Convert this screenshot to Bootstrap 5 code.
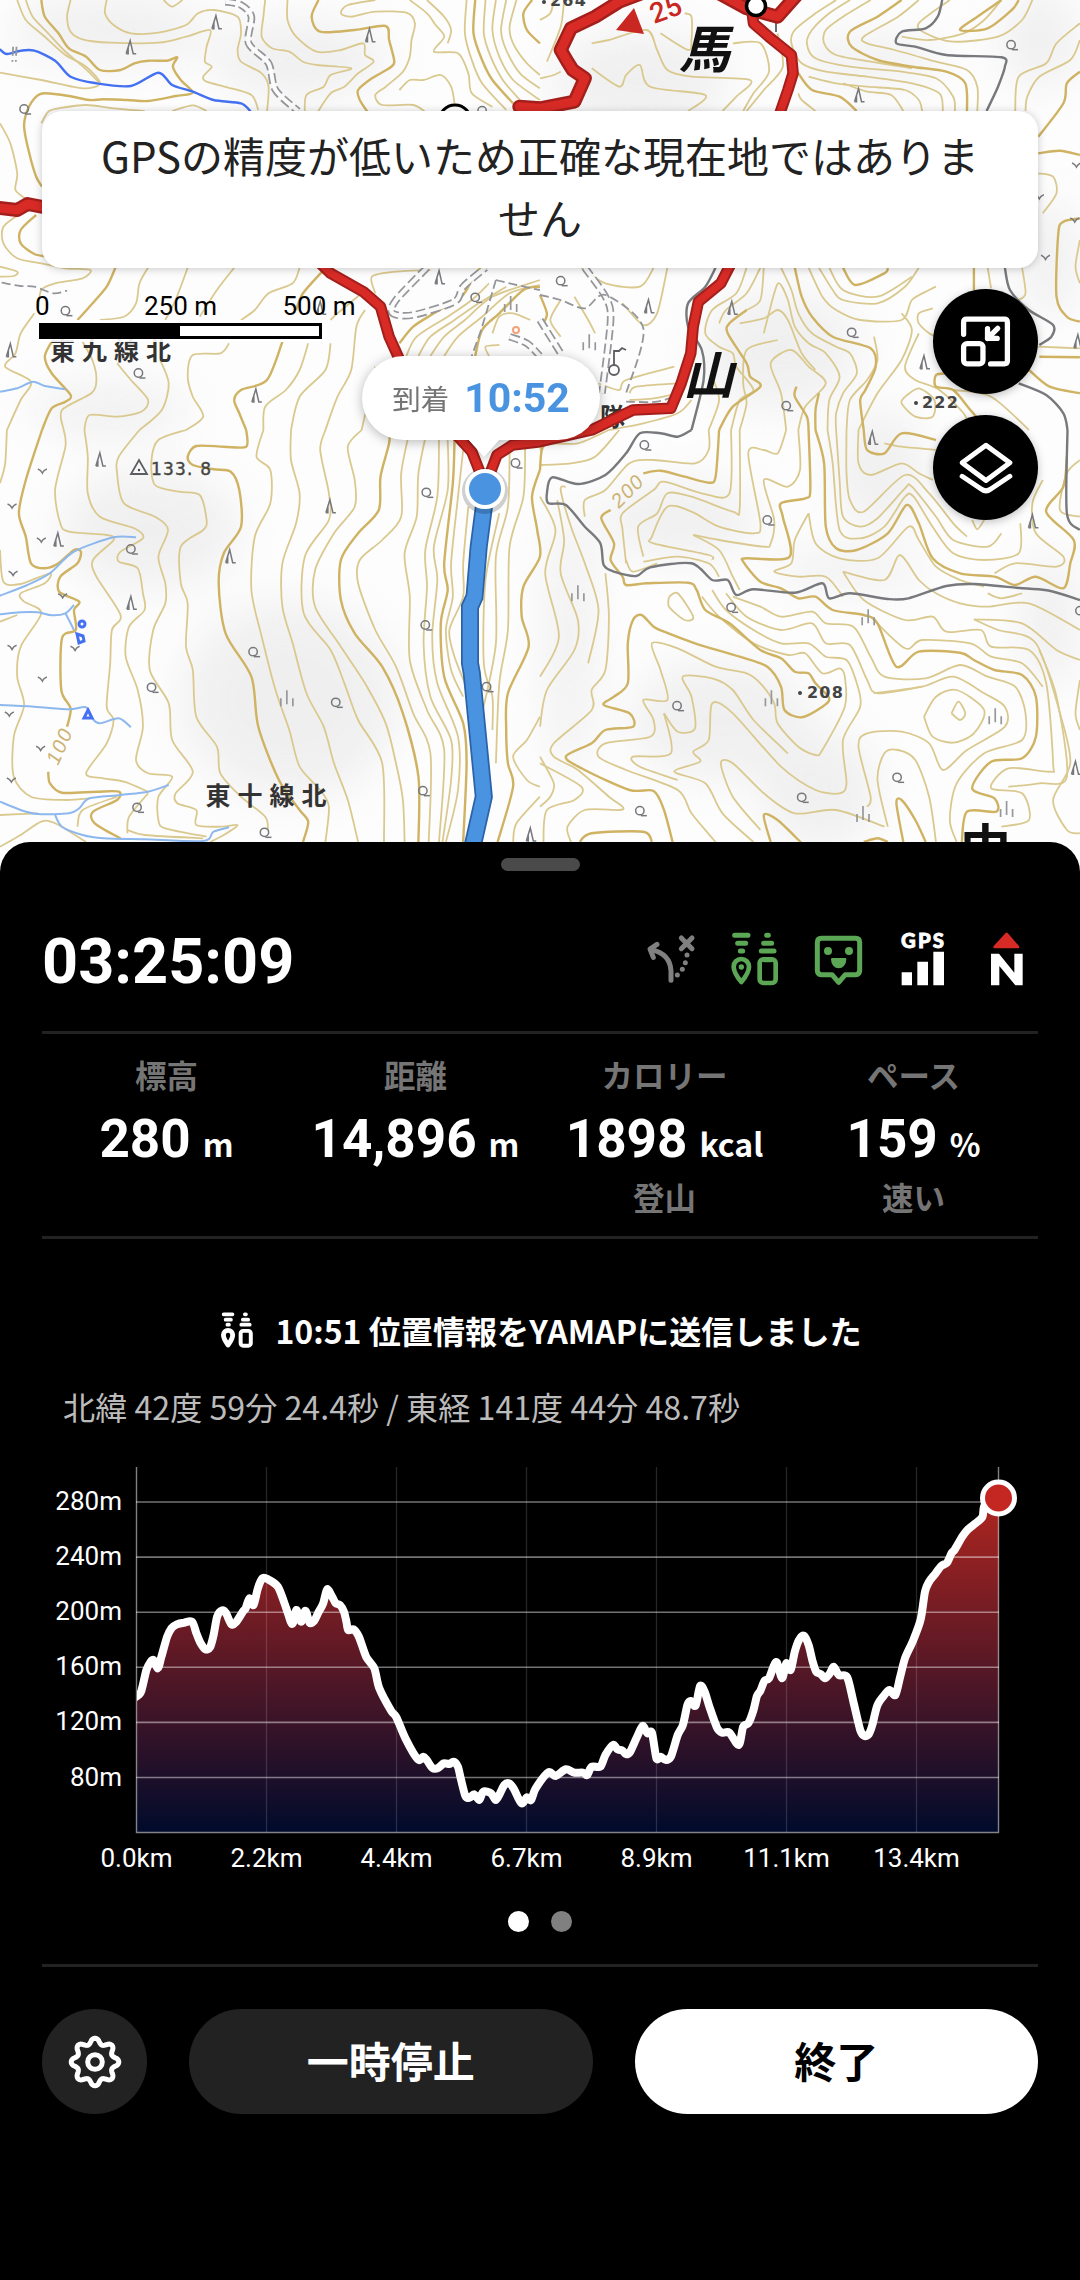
<!DOCTYPE html>
<html lang="ja">
<head>
  <meta charset="UTF-8">
  <title>YAMAP</title>
  <meta name="viewport" content="width=device-width, initial-scale=1">
  <link href="https://cdn.jsdelivr.net/npm/bootstrap@5.3.0/dist/css/bootstrap.min.css" rel="stylesheet">
  <style>
    :root {
      --jp: "Noto Sans CJK JP", sans-serif;
      --num: Roboto, "Noto Sans CJK JP", sans-serif;
      --line: #222;
      --muted: #757575;
      --route: #4a93e0;
    }

    body {
      background: #000;
      font-family: var(--jp);
      width: 1080px;
      height: 2280px;
      overflow: hidden;
    }

    /* Map */
    .map-area {
      height: 872px;
      padding: 111px 42px 0;
      overflow: hidden;
    }

    .map-canvas {
      position: absolute;
      top: 0;
      left: 0;
    }

    .map-canvas .thin { fill: none; stroke: #dac98f; stroke-width: 1.8; }
    .map-canvas .index { fill: none; stroke: #cfb262; stroke-width: 2.4; }
    .map-canvas .river { fill: none; stroke: #8db8ee; stroke-width: 2; }
    .map-canvas .stream { fill: none; stroke: #4470f2; stroke-width: 2.4; }
    .map-canvas .road { fill: none; stroke: #77797c; stroke-width: 2.4; }
    .map-canvas .trackEdge { fill: none; stroke: #94969a; stroke-width: 7.5; stroke-dasharray: 10 4; }
    .map-canvas .trackFill { fill: none; stroke: #fbfbfb; stroke-width: 4; }
    .map-canvas .trail { fill: none; stroke: #94969a; stroke-width: 1.8; stroke-dasharray: 9 4; }
    .map-canvas .courseEdge { fill: none; stroke: #a41f1b; stroke-width: 11.5; stroke-linejoin: round; stroke-linecap: round; }
    .map-canvas .courseFill { fill: none; stroke: #d82b26; stroke-width: 7.5; stroke-linejoin: round; stroke-linecap: round; }
    .map-canvas .courseEdge.wide { stroke-width: 14; }
    .map-canvas .courseFill.wide { stroke-width: 9; }

    .notice-banner {
      position: relative;
      height: 157px;
      padding: 13px 48px;
      border-radius: 20px;
      background: #fff;
      color: #222;
      font-size: 42px;
      line-height: 62px;
      text-align: center;
      box-shadow: 0 1px 8px rgba(0, 0, 0, .22);
    }

    .scale-bar {
      overflow: visible;
      font-family: var(--num);
      margin-left: -3px;
      margin-top: 22px;
      color: #000;
    }

    .map-controls { gap: 21px; margin-top: 21px; }

    .map-btn {
      width: 105px;
      height: 105px;
      background: #000;
      box-shadow: 0 2px 8px rgba(0, 0, 0, .25);
    }

    .arrival {
      position: absolute;
      left: 362px;
      top: 356px;
      width: 238px;
      height: 84px;
      border-radius: 42px;
      background: #fff;
      filter: drop-shadow(0 2px 6px rgba(0, 0, 0, .28));
      gap: 15px;
    }

    .arrival:after {
      content: "";
      position: absolute;
      top: 83px;
      left: 106px;
      border: 16px solid transparent;
      border-top: 18px solid #fff;
      border-bottom: 0;
    }

    .arrival-label { color: var(--muted); font-size: 28.5px; }
    .arrival-time { color: var(--route); font: 700 41px var(--num); }

    /* Bottom sheet */
    .sheet {
      position: relative;
      margin-top: -30px;
      padding: 16px 42px 0;
      border-radius: 30px 30px 0 0;
      background: #000;
      color: #fff;
      height: 1438px;
    }

    .grip {
      width: 79px;
      height: 13px;
      border-radius: 7px;
      background: #4a4a4a;
    }

    .status-row {
      margin-top: 18px;
      height: 145px;
      border-bottom: 3px solid var(--line);
    }

    .status-icons { margin-right: 1px; }

    .elapsed { font: 700 63px/1 var(--num); padding-top: 3px; }

    .stats {
      height: 205px;
      padding-top: 17px;
      border-bottom: 3px solid var(--line);
      text-align: center;
      white-space: nowrap;
    }

    .stat-name { color: var(--muted); font-size: 31.5px; line-height: 46px; font-weight: 700; }
    .stat-value { font: 700 53px/76px var(--num); padding-top: 4px; height: 76px; }
    .stat-value span { font: 700 32px/1 var(--jp); margin-left: 12px; }

    .sent-msg {
      margin-top: 67px;
      padding-left: 3px;
      height: 48px;
      gap: 22px;
      font-size: 32.1px;
      font-weight: 700;
    }

    .position-text {
      margin: 28px 0 0 21px;
      height: 48px;
      line-height: 48px;
      font-size: 32.15px;
      color: #bbb;
    }

    .profile { display: block; margin: 20px 0 0 -42px; font-family: var(--num); }

    .page-dots { height: 21px; gap: 22px; margin-top: 31px; }
    .page-dots span { width: 21px; height: 21px; background: #808080; }
    .page-dots span.current { background: #fff; }

    .sheet-actions {
      margin-top: 32px;
      padding-top: 42px;
      gap: 42px;
      border-top: 3px solid var(--line);
    }

    .act {
      height: 105px;
      border-radius: 53px;
      border: 0;
      padding-bottom: 5px;
      background: #222;
      color: #fff;
      font-size: 42px;
      font-weight: 700;
    }

    .act-round { width: 105px; }
    .act-light { background: #fff; color: #000; }
  </style>
</head>
<body>
  <main>
    <section class="map-area position-relative">
      <svg class="map-canvas" width="1080" height="872" viewBox="0 0 1080 872">
        <defs>
          <filter id="soft" x="-50%" y="-50%" width="200%" height="200%"><feGaussianBlur stdDeviation="22"/></filter>
          <g id="broadleaf" fill="none" stroke="#77787c" stroke-width="1.5"><circle cy="-1" r="4.2"/><path d="M1 4h6"/></g>
          <g id="conifer" fill="none" stroke="#77787c" stroke-width="1.5"><path d="M-4 6 0-7 3 6h3M-4 6h2V-1"/></g>
          <g id="scrub" fill="none" stroke="#96989c" stroke-width="1.7"><path d="M-6 7v-8M0 5v-14M6 7v-8"/></g>
          <g id="field" fill="none" stroke="#77787c" stroke-width="1.6"><path d="M-4.500-2q3 1 4.500 4 1.500-3 4.500-4"/></g>
        </defs>
        <rect width="1080" height="872" fill="#fdfdfd"/>
        <g fill="#e9e9ea" opacity=".65" filter="url(#soft)">
          <ellipse cx="110" cy="30" rx="100" ry="34"/>
          <ellipse cx="300" cy="60" rx="90" ry="40"/>
          <ellipse cx="640" cy="80" rx="90" ry="50"/>
          <ellipse cx="870" cy="60" rx="80" ry="24"/>
          <ellipse cx="1040" cy="40" rx="40" ry="50"/>
          <ellipse cx="1050" cy="260" rx="30" ry="60"/>
          <ellipse cx="150" cy="530" rx="90" ry="60"/>
          <ellipse cx="110" cy="410" rx="80" ry="26"/>
          <ellipse cx="290" cy="700" rx="110" ry="100"/>
          <ellipse cx="780" cy="350" rx="80" ry="60"/>
          <ellipse cx="680" cy="520" rx="80" ry="40"/>
          <ellipse cx="880" cy="470" rx="46" ry="60"/>
          <ellipse cx="850" cy="570" rx="80" ry="20"/>
          <ellipse cx="720" cy="720" rx="90" ry="60"/>
          <ellipse cx="820" cy="790" rx="60" ry="60"/>
          <ellipse cx="1050" cy="620" rx="30" ry="70"/>
          <ellipse cx="570" cy="640" rx="24" ry="140"/>
        </g>
        <g id="terrain"></g>
        <g fill="none" stroke="#4470f2" stroke-width="3">
          <circle cx="82" cy="624" r="3"/><path d="m77 634 6 2 1 5-5 2zM88 710l4 8h-8z"/>
        </g>
        <g stroke="#5b5d61" stroke-width="1.8" fill="none">
          <circle cx="614" cy="370" r="5"/><path d="M614 365v-14h5l3-3 4 2M131 474h16l-8-14zM776 20v12"/>
        </g>
        <circle cx="516" cy="330" r="3" fill="none" stroke="#f1a27a" stroke-width="2"/>
        <g fill="#333" font-family="'Noto Sans CJK JP', sans-serif" font-weight="700">
          <text x="50" y="360" font-size="25" letter-spacing="7">東九線北</text>
          <text x="205.500" y="805" font-size="25" letter-spacing="7">東十線北</text>
          <text x="600" y="426" font-size="25">隊</text>
          <text transform="translate(679 68) skewX(-14)" font-size="51" fill="#111">馬</text>
          <text transform="translate(683 394) skewX(-14)" font-size="51" fill="#111">山</text>
          <text x="960" y="867" font-size="51" fill="#111">中</text>
        </g>
        <g fill="#444" font-family="'DejaVu Sans', sans-serif" font-weight="700" font-size="16" letter-spacing="1.200">
          <text x="807" y="698">208</text>
          <text x="922" y="408">222</text>
          <text x="550" y="6">264</text>
          <text x="151" y="475" font-family="'DejaVu Sans', sans-serif" font-weight="400" font-size="17" letter-spacing="1.200" stroke="#444" stroke-width=".4">133. 8</text>
        </g>
        <g fill="#444"><circle cx="800" cy="693" r="2"/><circle cx="916" cy="403" r="2"/><circle cx="544" cy="2" r="2"/><circle cx="139" cy="470" r="1.200"/></g>
        <g fill="#ccb272" font-family="'Liberation Sans', sans-serif" font-style="italic" font-size="20" letter-spacing="1.500">
          <text transform="translate(58 766) rotate(-66)">100</text>
          <text transform="translate(619 509) rotate(-45)">200</text>
        </g>
        <circle cx="455" cy="121" r="16" fill="none" stroke="#000" stroke-width="3"/>
        <g id="courses"></g>
        <circle cx="756" cy="6" r="9.500" fill="#fff" stroke="#000" stroke-width="3.500"/>
        <path d="M616 30 634 8l10 26z" fill="#c92722"/>
        <text transform="translate(654 24) rotate(-20)" fill="#c92722" font-family="Roboto, sans-serif" font-weight="500" font-size="28">25</text>
        <circle cx="485" cy="491" r="23" fill="#000" opacity=".18"/>
        <circle cx="485" cy="489" r="18" fill="#4a93e0" stroke="#fff" stroke-width="4"/>
      </svg>

      <div class="notice-banner">GPSの精度が低いため正確な現在地ではありません</div>

      <div class="d-flex justify-content-between align-items-start position-relative">
        <svg class="scale-bar" width="330" height="60" font-size="26">
          <path d="M0 30h288v22H0z" fill="#fff" opacity=".9"/>
          <text x="-4" y="25">0</text>
          <text x="105" y="25">250 m</text>
          <text x="243.500" y="25">500 m</text>
          <path d="M1.500 34.500h280v13h-280z" fill="#fff" stroke="#000" stroke-width="3"/>
          <path d="M1 34h140v14H1z"/>
        </svg>
        <div class="map-controls d-flex flex-column">
          <div class="map-btn rounded-circle d-flex align-items-center justify-content-center">
            <svg width="55" height="55" viewBox="0 0 54 54" fill="none" stroke="#fff" stroke-width="5.200" stroke-linecap="round" stroke-linejoin="round">
              <path d="M5.500 20V8q0-3 3-3h37q3 0 3 3v38q0 3-3 3H32"/>
              <rect x="5.500" y="29" width="19" height="20" rx="3.500"/>
              <path d="M39 14 29 24M29 14.500V24h9.500"/>
            </svg>
          </div>
          <div class="map-btn rounded-circle d-flex align-items-center justify-content-center">
            <svg width="56" height="56" viewBox="0 0 54 54" fill="none" stroke="#fff" stroke-width="4.800" stroke-linecap="round" stroke-linejoin="round">
              <path d="M27 5 50 22 27 39 4 22z"/>
              <path d="M4 35l18 12q5 4 10 0l18-12"/>
            </svg>
          </div>
        </div>
      </div>

      <div class="arrival d-flex align-items-center justify-content-center">
        <span class="arrival-label">到着</span>
        <span class="arrival-time">10:52</span>
      </div>
    </section>

    <section class="sheet">
      <div class="grip mx-auto"></div>

      <div class="status-row d-flex align-items-center justify-content-between">
        <div class="elapsed">03:25:09</div>
        <div class="status-icons d-flex gap-4">
          <svg width="60" height="60" viewBox="32 58 180 180" fill="none" stroke="#808080" stroke-width="15" stroke-linecap="round" stroke-linejoin="round">
            <path d="M122 209v-28q-2-52-61-65M80 101 59 115l10 25M153 82l32 32M185 82l-32 32"/>
            <path d="M170 133v.1M165 156v.1M156 176v.1M141 193v.1"/>
          </svg>
          <svg width="60" height="60" viewBox="285 58 180 180" fill="none" stroke="#5ca755" stroke-width="15" stroke-linecap="round" stroke-linejoin="round">
            <path d="M314 74h40M323 98h24M331 121h7M410 74h5M401 98h24M394 121h38"/>
            <path d="M334 214q-23-28-23-46a23 23 0 0 1 46 0q0 18-23 46z" stroke-width="14"/>
            <circle cx="334" cy="169" r="8" fill="#5ca755" stroke="none"/>
            <rect x="389" y="146" width="48" height="71" rx="11" stroke-width="14"/>
            <path d="M404 150h18" stroke-width="10"/>
          </svg>
          <svg width="60" height="60" viewBox="537 58 180 180" fill="none" stroke="#5ca755" stroke-width="15" stroke-linejoin="round">
            <path d="M574 83h103q12 0 12 12v84q0 13-12 13h-31l-20 23-20-23h-32q-12 0-12-13V95q0-12 12-12z"/>
            <g fill="#5ca755" stroke="none"><circle cx="594" cy="121" r="12"/><circle cx="657" cy="121" r="12"/><path d="M606 142h40q3 0 3 4a23 27 0 0 1-46 0q0-4 3-4z"/></g>
          </svg>
          <svg width="60" height="60" viewBox="789 58 180 180" fill="#fff">
            <text x="813" y="112" font-family="Lato, sans-serif" font-weight="900" font-size="61" textLength="129" lengthAdjust="spacing" stroke="#fff" stroke-width="2.500">GPS</text>
            <path d="M815 185h31v39h-31zM862 153h32v71h-32zM910 123h32v101h-32z"/>
          </svg>
          <svg width="60" height="60" viewBox="1041 58 180 180" fill="#fff">
            <path d="M1130 70 1164 109H1094z" fill="#d82b26" stroke="#d82b26" stroke-width="8" stroke-linejoin="round"/>
            <path d="M1083 224v-95h24l46 57v-57h25v95h-22l-48-58v58z"/>
          </svg>
        </div>
      </div>

      <div class="stats row g-0">
        <div class="col-3">
          <div class="stat-name">標高</div>
          <div class="stat-value">280<span>m</span></div>
        </div>
        <div class="col-3">
          <div class="stat-name">距離</div>
          <div class="stat-value">14,896<span>m</span></div>
        </div>
        <div class="col-3">
          <div class="stat-name">カロリー</div>
          <div class="stat-value">1898<span>kcal</span></div>
          <div class="stat-name">登山</div>
        </div>
        <div class="col-3">
          <div class="stat-name">ペース</div>
          <div class="stat-value">159<span>%</span></div>
          <div class="stat-name">速い</div>
        </div>
      </div>

      <div class="sent-msg d-flex align-items-center justify-content-center">
        <svg width="32" height="36" viewBox="302 65 145 160" fill="none" stroke="#fff" stroke-width="17" stroke-linecap="round" stroke-linejoin="round">
          <path d="M314 74h40M323 98h24M331 121h7M410 74h5M401 98h24M394 121h38"/>
          <path d="M334 213q-21-28-21-45a21 21 0 0 1 42 0q0 17-21 45z" stroke-width="22"/>
          <rect x="391" y="149" width="46" height="67" rx="11" stroke-width="18"/>
        </svg>
        <span>10:51 位置情報をYAMAPに送信しました</span>
      </div>
      <div class="position-text">北緯 42度 59分 24.4秒 / 東経 141度 44分 48.7秒</div>

      <svg class="profile" width="1080" height="430" viewBox="0 1450 1080 430" font-size="26" fill="#fff">
        <defs>
          <linearGradient id="heat" gradientUnits="userSpaceOnUse" x1="0" y1="1475" x2="0" y2="1828">
            <stop offset="0" stop-color="#bb271f"/>
            <stop offset="1" stop-color="#020b2b"/>
          </linearGradient>
          <clipPath id="plot"><path d="M137 1450h880v383H137z"/></clipPath>
        </defs>
        <path id="heatArea" fill="url(#heat)"/>
        <g id="grid"></g>
        <path id="heatLine" fill="none" stroke="#fff" stroke-width="8" stroke-linejoin="round" stroke-linecap="round" clip-path="url(#plot)"/>
        <circle cx="998.500" cy="1498" r="16" fill="#c42722" stroke="#fff" stroke-width="5"/>
      </svg>

      <div class="page-dots d-flex justify-content-center">
        <span class="current rounded-circle"></span>
        <span class="rounded-circle"></span>
      </div>

      <div class="sheet-actions d-flex">
        <button class="act act-round flex-shrink-0 p-0 d-flex align-items-center justify-content-center" type="button" aria-label="設定">
          <svg width="60" height="60" viewBox="-30 -30 60 60" fill="none" stroke="#fff" stroke-width="5">
            <path id="gear" stroke-linejoin="round"/>
            <circle r="7.300"/>
          </svg>
        </button>
        <button class="act flex-fill w-50" type="button">一時停止</button>
        <button class="act act-light flex-fill w-50" type="button">終了</button>
      </div>
    </section>
  </main>

  <script src="https://cdn.jsdelivr.net/npm/bootstrap@5.3.0/dist/js/bootstrap.bundle.min.js"></script>
  <script>
    const NS = 'http://www.w3.org/2000/svg';

    // Survey sheets: origin in the map and units per pixel
    const sheets = {
      nw: { x: 0, y: 0, kx: 2.904, ky: 3 },
      ne: { x: 540, y: 0, kx: 2.904, ky: 3 },
      sw: { x: 0, y: 430, kx: 2.904, ky: 3 },
      se: { x: 540, y: 430, kx: 2.904, ky: 3 }
    };

    const lines = {
      nw: {
        thin: [
          '50,0 75,60 130,110 190,165 250,200 290,250 240,265 120,240 0,218',
          '75,0 95,50 140,100 185,150 230,190 262,220 290,250',
          '205,0 195,50 205,95 240,118 320,128 460,128 540,110 610,90 600,140 595,185 615,200 590,230 600,245 660,262 730,285 750,330',
          '310,0 305,40 330,75 380,100 460,98 540,75 575,40 620,30 690,50 700,100 690,150 700,185 760,220 780,260 775,340',
          '475,0 500,20 530,0',
          '770,0 765,50 760,110 790,145 840,155 880,185 920,195 1020,205 960,225 940,260 890,285 885,340',
          '835,0 835,60 860,110 920,155 990,150 1055,130 1060,165 1085,185 1040,220 1000,260 960,280 920,340',
          '1090,0 1010,15 990,40 1020,50 1090,35 1180,38 1205,70 1195,120 1190,170 1170,215 1120,260 1090,285 1110,315 1200,315 1240,340',
          '1190,0 1240,40 1265,75 1290,110 1260,155 1330,160 1360,220 1370,280 1430,320',
          '1240,0 1290,50 1310,90 1300,130',
          '1160,270 1190,240 1230,240 1280,225 1310,260 1320,310',
          '1355,0 1350,100 1370,180 1400,250 1470,330',
          '1410,0 1405,100 1425,170 1460,240 1510,300',
          '1440,0 1430,90 1450,170 1490,240 1568,300',
          '1470,0 1455,90 1470,150 1510,220 1568,265',
          '1500,0 1480,80 1490,130 1530,190 1568,225',
          '0,370 30,430 50,520 45,570 80,600',
          '120,370 140,335 170,325 250,315 330,325 420,333',
          '500,333 560,316 600,333',
          '60,640 10,680 10,730 50,775 120,790 190,805 262,810 240,835 160,850 120,870 110,930',
          '0,800 50,815 40,828 0,830',
          '430,803 405,850 395,910 360,950 290,960',
          '545,803 510,900 480,960',
          '680,803 630,870 580,950',
          '870,803 850,850 780,880 740,930 700,960',
          '100,940 60,1000 45,1060 15,1100 90,1145 60,1200 20,1290',
          '240,1025 270,1085 280,1140 265,1180 180,1230 185,1290',
          '340,1090 380,1140 430,1200 410,1235 340,1250 260,1245 245,1290',
          '465,1080 490,1150 470,1230 405,1290',
          '665,1030 640,1060 560,1065 545,1130 560,1190 590,1250 540,1290',
          '895,1030 870,1110 830,1170 770,1220 765,1290',
          '960,1030 945,1110 870,1190 845,1290',
          '1060,930 1035,980 1020,1110 980,1190 945,1290',
          '1050,880 980,940 960,960',
          '1180,1068 1210,1010 1300,950 1370,900 1420,850',
          '1215,1068 1250,1010 1320,960 1390,910 1470,860',
          '1250,1068 1290,1010 1350,960 1430,890 1568,840',
          '1290,1068 1330,1010 1400,950 1480,880 1568,855',
          '1090,880 1080,830 1150,815 1250,810',
          '1420,1068 1410,1040 1450,1035',
          '1430,1000 1450,950 1490,940 1540,960',
          '1090,1100 1070,1200 1050,1290'
        ],
        index: [
          '120,0 130,50 170,100 200,145 250,170 290,210 350,210 390,190 430,182 485,182 515,172 502,200 525,240 560,278 510,288 430,303 370,300 300,298 260,300 200,288 130,280 105,290 80,330 70,380 85,460 105,530 122,560',
          '925,0 905,50 930,95 1030,90 1120,78 1130,120 1145,185 1130,205 1080,235 1040,270 1045,300 1070,340',
          '1380,0 1375,100 1400,180 1430,240 1490,310',
          '1545,0 1520,40 1530,90 1568,130',
          '105,645 60,690 60,730 100,762 140,770',
          '335,803 310,860 260,920 225,960',
          '150,1025 130,1070 150,1120 205,1185 190,1205 150,1225 122,1290',
          '820,1025 775,1140 700,1170 680,1200 695,1240 715,1290',
          '940,810 880,880 860,930',
          '1160,1030 1200,980 1260,940 1340,890 1370,840 1395,803',
          '1568,860 1520,870 1450,940 1400,990 1380,1068'
        ],
        stream: ['0,148 20,162 60,152 100,152 160,182 205,230 280,250 380,258 460,218 500,255 560,275 620,300 700,310 728,335'],
        river: ['0,1175 50,1165 95,1145 130,1158 190,1168'],
        track: ['655,5 700,15 730,50 722,130 780,190 800,270 865,333', '1240,803 1150,900 1140,940 1200,945 1320,905 1345,860 1410,803', '1480,1010 1530,1030 1568,1068'],
        trail: ['5,848 60,858 100,860 155,880 195,872', '1440,840 1400,980 1370,1068', '1440,840 1500,855 1568,870', '38,140 36,185', '48,140 46,185']
      },
      ne: {
        thin: [
          '70,0 60,80 20,185', '0,60 30,40 40,0', '0,235 40,225 60,215',
          '150,130 200,120 310,90 340,150 370,210 440,230 610,240 570,290 530,333',
          '420,40 440,50 440,120 430,150 350,100',
          '150,205 230,260 250,225 290,195 320,260 480,285 430,333',
          '560,130 640,130 665,215 620,280 590,333',
          '690,100 705,200 650,270 600,333',
          '860,0 800,40 740,90 730,130 760,190 830,215 950,230 1080,250 1160,280 1170,333',
          '900,0 840,40 790,90 775,130 800,175 900,200 1050,215 1150,235 1200,290 1205,333',
          '960,0 880,50 830,90 825,130 860,165 960,185 1080,205',
          '1100,0 1040,50 940,110 950,130 1030,150 1150,185 1240,210 1270,260 1270,333',
          '1340,0 1290,60 1230,100 1130,120 1050,110',
          '1430,0 1400,60 1330,110 1200,125 1120,100 1100,70 1190,0',
          '1568,70 1500,130 1470,190 1390,230 1380,333',
          '1568,120 1540,180 1450,230 1415,290 1410,333',
          '750,280 760,300 800,333',
          '880,250 950,275 1020,285 1055,333',
          '780,230 860,250 950,260 1060,270 1100,300 1110,333',
          '1447,520 1490,530 1500,580 1460,640',
          '1447,1040 1568,1045',
          '1568,720 1555,800 1568,850',
          '120,803 190,850 290,860 330,803',
          '240,910 300,975 340,940 370,803',
          '60,900 30,960 60,1010', '100,890 140,960 160,1000',
          '600,803 570,880 500,930 480,1000 520,1040 560,1060 570,1100 620,1170 580,1200 550,1290',
          '640,803 600,880 540,930 520,970',
          '700,803 730,870 750,940 790,1000 860,1040 900,1060 920,1120 880,1180 860,1240 860,1290',
          '780,803 820,890 860,930 930,960 1050,960 1080,900 1130,870 1150,860',
          '810,803 850,870 880,900 980,910 1060,860 1100,803',
          '840,803 880,870 980,890 1080,830',
          '650,803 640,900 600,930', '650,1000 680,880 695,850 720,900 740,980 780,1030 830,1060 870,1130 840,1200 835,1290',
          '580,970 650,955 690,930 720,960 760,1060 800,1110',
          '1141,925 1100,940 1100,970 1130,1000 1150,1010',
          '1050,940 1080,990 1050,1080 980,1180 925,1290',
          '1060,1190 1050,1210 1090,1250 1140,1250 1145,1200 1100,1165 1060,1190',
          '1100,1000 1060,1100 1090,1140 1160,1170 1230,1240 1250,1290',
          '715,1290 700,1180 670,1090 730,1050 780,1100 830,1150 770,1220 750,1290',
          '580,1290 600,1210 590,1150 600,1050 690,1020', '890,1290 900,1200 950,1140 980,1080 970,1010',
          '1300,803 1310,865', '1200,1170 1310,1190 1420,1290', '1400,803 1410,880 1390,900',
          '260,1180 280,1160 400,1150', '260,1200 330,1195 400,1180', '170,1150 230,1170 250,1140 390,1100',
          '200,1290 300,1270 400,1240 440,1200', '490,1290 520,1200 500,1130'
        ],
        index: [
          '1050,0 980,50 900,95 905,140 980,180 1080,200 1180,215 1235,250 1240,333',
          '1340,0 1270,50 1220,90 1300,85 1370,30 1390,0',
          '1568,215 1530,250 1520,310 1447,410',
          '750,220 790,270 870,290 920,333',
          '1447,460 1510,452 1568,465',
          '1568,655 1520,665 1505,700 1500,890 1530,950 1568,965',
          '1450,1070 1568,1072',
          '740,803 760,890 790,950 850,1010 960,1045 975,1100 945,1170 930,1200 940,1290',
          '880,803 915,855 1000,820 1010,803',
          '600,930 550,970 545,1000 600,1090 610,1130 640,1160 560,1220 520,1290',
          '780,1290 775,1250 740,1190 745,1160', '800,1290 800,1230 810,1180',
          '1180,1120 1150,1125 1150,1160 1200,1170 1250,1230 1300,1290',
          '1420,1110 1480,1160 1568,1180',
          '1260,803 1260,870', '0,885 20,940 10,970'
        ],
        road: [
          '1168,0 1155,50 1120,85 1050,95 1035,130 1090,140 1180,165 1340,172 1350,200 1330,260 1297,333',
          '1350,803 1365,870 1420,930 1490,975 1485,1010 1450,1035',
          '1390,1150 1470,1185 1520,1240 1532,1290',
          '510,803 480,860 430,910 430,980 470,1050 475,1140 440,1290'
        ],
        track: ['130,803 190,890 205,960 180,1180', '0,960 60,1060'],
        trail: ['0,885 60,900 130,925 190,885 300,985 250,1180', '250,1205 340,1205 400,1185']
      },
      sw: {
        thin: [
          '20,0 15,100 0,160',
          '0,360 10,455 60,462 145,430 130,460 60,490 70,515 120,550 60,650 50,740 70,825 40,920 40,1040 90,1100 190,1110 260,1105',
          '0,575 50,555',
          '185,0 190,50 160,180 175,280 200,305 310,315 330,330 270,390 280,440 350,555 325,600 320,700 310,830 330,870 310,940 250,1030 300,1045 360,1055 430,1085',
          '245,0 255,80 255,190 290,260 390,295 415,325 350,365 345,395 400,415 415,490 420,540 375,590 365,680 400,780 415,890 395,990 430,1030 500,1040 460,1100 460,1170 480,1195 600,1220',
          '405,0 345,80 340,130 360,220 450,260 488,300 460,380 480,460 480,520 445,600 435,720 490,820 500,930 560,1025 510,1090 515,1120 570,1140 570,1185 640,1190 690,1185 650,1215 610,1236',
          '540,0 460,30 440,90 450,165 520,185 580,195 600,270 590,300 525,350 525,460 545,520 540,650 560,720 570,860 630,950 640,1030 700,1100 770,1160 778,1200',
          '765,0 745,80 785,120 785,220 740,320 730,480 760,620 800,780 840,900 870,1010 930,1080 955,1130 945,1236',
          '845,0 845,90 870,190 860,280 820,400 820,530 850,640 890,790 940,890 970,1000 1010,1110 1040,1236',
          '945,0 930,60 955,190 955,270 885,380 882,550 960,660 1000,760 1040,870 1110,1000 1115,1236',
          '1050,0 1010,50 1030,150 1030,230 970,310 915,420 915,530 990,650 1060,760 1120,880 1150,1000 1170,1110 1175,1236',
          '1190,0 1165,130 1165,260 1110,330 1045,390 1040,460 1090,600 1150,710 1200,850 1250,970 1245,1236',
          '1240,0 1215,130 1210,260 1175,370 1190,500 1190,690 1240,840 1290,960 1275,1236',
          '1275,30 1270,200 1235,360 1240,470 1230,640 1250,800 1310,930 1310,1050 1285,1236',
          '1300,30 1300,180 1260,350 1270,450 1255,620 1270,760 1330,920 1330,1080 1295,1236',
          '1345,60 1330,200 1310,400 1315,500 1295,600 1310,720 1345,800',
          '1360,230 1345,400 1345,500 1305,600 1320,680 1350,760',
          '1450,250 1410,450 1405,700 1430,800 1430,900',
          '1480,50 1475,230 1440,380 1440,640 1400,850',
          '1525,50 1520,200 1480,350 1475,600 1450,760 1440,1000',
          '1568,860 1530,930 1490,980 1530,1050 1568,1070',
          '1568,1100 1500,1180 1490,1236',
          '0,1155 110,1150', '0,1250 60,1215 120,1175 160,1180 250,1236',
          '225,1190 240,1140 340,1100', '370,1210 375,1160 430,1090', '370,1200 420,1215 590,1225'
        ],
        index: [
          '122,0 75,150 55,250 75,320 90,400 130,415 170,400 215,360 235,365 225,400 175,440 172,485 230,515 215,540 220,600 180,625 178,780 205,835 195,890',
          '140,1025 145,1060 180,1088 280,1085 345,1085 340,1110 270,1145 275,1180 350,1225',
          '715,0 715,50 650,50 570,48 545,80 560,105 620,118 670,125 695,180 700,290 650,370 635,460 655,610 730,740 750,890 810,1050 870,1140 895,1175 880,1236',
          '1130,0 1130,40 1105,140 1100,240 1040,310 990,390 990,510 1030,610 1110,710 1170,850 1215,1040 1215,1236',
          '1320,30 1315,160 1290,400 1300,480 1280,580 1290,740 1345,880 1355,1000 1345,1236',
          '1568,120 1545,200 1560,300 1568,380 1520,470 1515,560 1535,650 1475,790 1470,900 1475,1000 1490,1070 1445,1236'
        ],
        river: [
          '0,497 80,465 145,430 215,365 330,322 395,322',
          '0,553 60,547 110,547 150,556 190,550 215,525', '190,550 215,600',
          '0,825 100,830 200,838 250,832 270,868 290,880 345,865 380,892',
          '0,1115 60,1140 110,1152 200,1150 230,1135 260,1105 350,1095 430,1085 490,1065',
          '160,1155 180,1190 240,1215 300,1225 420,1228 590,1233 620,1205 665,1192'
        ]
      },
      se: {
        thin: [
          '0,60 20,40 110,40 200,0', '0,105 90,100 160,80 230,0',
          '75,170 60,180 90,290 130,400 170,540 140,700',
          '0,200 45,300 15,430 55,620 0,740',
          '50,210 70,330 60,430 110,570 100,660 20,780 0,890',
          '190,430 200,560 190,720 150,780 150,840 40,940 40,980 110,1020 200,1100 240,1130 230,1140 130,1140 80,1190 90,1236',
          '130,260 130,210 190,180 260,100 330,90 450,100 490,60 490,0',
          '250,400 240,300 240,250 330,180 360,155 470,190 550,190 555,0',
          '300,380 285,290 340,250 370,190 440,200 560,245 580,235 580,0',
          '250,390 270,425 340,400',
          '500,390 490,375 330,340 325,320 370,230 440,245 520,290 620,310 640,280 605,70 650,60 690,70 715,0',
          '445,315 520,330 650,350 670,340 680,270 650,150 720,170 755,120 750,0',
          '445,315 520,360 560,440 580,480', '300,395 400,380 490,400 520,440',
          '835,0 850,100 870,300 930,325 1000,290 1060,200 1085,200 1140,290 1200,370 1290,390 1390,370 1395,280',
          '860,0 870,150 880,260 930,290 980,265 1060,175 1080,170 1150,260 1200,330 1300,350 1340,310',
          '890,0 890,130 900,210 940,245 1060,135 1130,190 1200,280 1240,320',
          '925,0 925,100 960,135 1050,100 1100,130 1141,150',
          '1000,40 1050,50 1150,60',
          '1255,270 1270,298 1290,270',
          '780,250 740,330 730,400 680,425 750,440 830,440 880,500',
          '780,250 800,340 870,385 980,385 1070,290 1100,330 1150,410 1220,450 1290,470',
          '880,425 1000,450 1045,375 1100,450 1150,490 1220,520 1300,530 1420,520 1568,600',
          '1300,490 1340,505 1400,490', '1320,430 1380,400 1500,410 1520,380 1440,310 1430,220 1460,150',
          '880,425 940,510 1060,570 1140,560 1180,605 1280,600 1310,650 1420,660 1470,760 1490,1000 1480,1025 1360,1015 1310,1075 1400,1090 1420,1170 1340,1190',
          '1360,1070 1450,1060 1530,1040 1500,800 1450,660',
          '960,560 1060,655 1110,630 1250,640 1310,680 1400,700 1460,770',
          '560,500 640,530 700,560 790,545 830,580 910,590 960,680 1000,740 1120,745 1220,705 1300,740 1380,770 1410,850 1400,930 1290,970 1210,1060 1190,1170 1210,1236',
          '500,480 540,540 620,600 700,640 780,640 830,680 890,690 920,760 930,830 880,930 890,1060 870,1090 800,1080 700,1010 560,850 500,820 490,930 445,965 465,995 390,1025 480,1060 530,1150 620,1236',
          '540,490 600,560 700,600 790,580 830,640 900,645 950,750 980,790 1110,770',
          '470,500 520,560 620,640 720,675 770,670 820,730 870,715 885,740 885,830 820,960 800,975 750,950 690,880 680,820 640,760 600,730 510,710 400,655 325,640 350,720 370,810 300,810 330,870 320,920 190,940 170,980 250,1020 400,1080 440,1150 510,1236',
          '360,850 400,905 450,895 440,800 415,740 500,745 560,780 620,870 720,970',
          '360,850 380,970 270,980 290,1010 400,1050',
          '970,790 1110,770 1200,740 1290,790 1350,830 1350,890 1240,960 1170,1020 1130,940 1050,905 950,910 925,950 960,1100 950,1130',
          '1115,860 1150,800 1210,780 1290,840 1260,910 1200,938 1140,920 1115,860',
          '1195,850 1215,815 1235,850 1220,870 1195,850',
          '375,500 400,490 445,560 420,570 375,530 375,500',
          '1010,1190 980,1050 1000,970 1040,960 1090,990 1130,1100 1150,1236',
          '640,1200 560,1100 525,1000 560,1000 650,1090 740,1150 860,1140 1000,1190',
          '1260,568 1400,580 1500,660 1568,690',
          '1260,568 1330,600 1440,640 1510,850 1540,1000 1490,1110 1530,1200 1568,1210',
          '0,980 40,1060 30,1100 0,1130', '0,1000 120,1070 100,1110 20,1140 10,1236',
          '1568,750 1555,850 1568,900', '1568,90 1530,130 1510,240 1568,260'
        ],
        index: [
          '300,130 350,122 420,140 490,158 510,140 520,0',
          '0,120 5,60 20,40 70,30',
          '205,240 178,265 215,340 205,390 240,440 250,465 310,460 430,458 455,480 480,540 550,580 640,660 700,685 740,725 780,730 800,760 840,805 820,830 760,862 710,840 700,770 660,710 580,680 450,640 360,605 330,590 295,555 270,570 255,640 255,760 215,800 185,825 260,850 270,890 190,900 150,940 75,980 130,1020 260,1080 330,1083 360,1140 385,1236',
          '780,0 785,180 770,205 700,220 705,260 725,380 600,385 590,395 640,455 700,475 750,505 800,500 850,540 940,555 980,580 1035,710 1100,665 1220,668 1260,690 1320,720 1400,735 1440,800 1440,920 1400,985 1310,995 1255,1075 1320,1105 1325,1145 1240,1145 1225,1236',
          '800,0 825,100 830,290 860,355 920,360 1010,310 1065,225 1100,280 1140,385 1220,430 1320,440 1380,465 1440,440 1520,475 1540,400 1550,330 1470,245 1520,170 1530,80',
          '940,0 950,60 1000,70 1050,10 1150,30',
          '1055,1236 1035,1120 1050,1110 1090,1170 1120,1236',
          '760,1240 690,1170 650,1155 670,1236',
          '115,1236 150,1210 300,1205 325,1236', '940,1236 980,1225 1010,1236'
        ],
        road: [
          '440,0 400,20 350,10 290,10 250,70 190,135 110,162 35,142 20,190 25,220 75,225 130,290 175,340 185,405 215,425 280,438 320,412 440,400 500,450 545,450 570,495 620,478 740,488 820,460 840,505 900,490 1010,507 1070,505 1180,468 1260,462 1400,475 1480,482 1568,510',
          '1532,0 1530,250 1568,300'
        ]
      }
    };

    const signs = {
      nw: {
        broadleaf: '70,330 190,935 402,1122 1380,895 1400,335',
        conifer: '378,143 627,68 1073,107 30,1052 743,1188 1275,833 930,925',
        scrub: '1483,915'
      },
      ne: {
        broadleaf: '1368,137 60,845 905,1000 715,1220',
        conifer: '925,287 315,920 557,925 1115,1088 1562,1025',
        scrub: '143,1030',
        field: '1558,495 1553,660 1468,772 1450,590'
      },
      sw: {
        broadleaf: '380,360 735,668 440,775 975,820 1238,190 1235,588 1413,773 1228,1085 768,1210 398,1135 1497,102',
        conifer: '290,90 168,330 667,380 958,230 380,520 1540,1215',
        scrub: '833,808',
        field: '123,123 35,228 120,330 38,430 182,497 35,652 218,655 123,747 27,852 118,955 33,1050'
      },
      se: {
        broadleaf: '303,48 660,273 555,535 398,830 760,1105 1037,1045 290,1145 1568,545',
        conifer: '965,25 1430,275 1555,1015',
        scrub: '110,493 953,565 672,808 1322,862 938,1155 1355,1140'
      }
    };

    function toPoints(text, s) {
      return text.split(' ').map(p => {
        const [x, y] = p.split(',').map(Number);
        return [s.x + x / s.kx, s.y + y / s.ky];
      });
    }

    // Catmull-Rom through the points
    function smooth(pts) {
      let d = 'M' + pts[0].map(n => n.toFixed(1));
      for (let i = 0; i < pts.length - 1; i++) {
        const a = pts[i - 1] || pts[i], b = pts[i], c = pts[i + 1], e = pts[i + 2] || c;
        d += 'C' + [b[0] + (c[0] - a[0]) / 7, b[1] + (c[1] - a[1]) / 7, c[0] - (e[0] - b[0]) / 7, c[1] - (e[1] - b[1]) / 7, c[0], c[1]].map(n => n.toFixed(1));
      }
      return d;
    }

    function straight(pts) {
      return 'M' + pts.map(p => p.map(n => n.toFixed(1))).join('L');
    }

    function add(parent, tag, attrs, text) {
      const el = document.createElementNS(NS, tag);
      for (const k in attrs) el.setAttribute(k, attrs[k]);
      if (text) el.textContent = text;
      parent.appendChild(el);
      return el;
    }

    const terrain = document.getElementById('terrain');
    ['thin', 'index', 'river', 'stream', 'road', 'track', 'trail'].forEach(kind => {
      const drawn = [];
      for (const key in lines) {
        (lines[key][kind] || []).forEach(text => drawn.push({ key, pts: toPoints(text, sheets[key]) }));
      }

      // Contours of neighbouring sheets meet at the sheet edge
      const ends = [];
      drawn.forEach(l => [l.pts[0], l.pts[l.pts.length - 1]].forEach(p => ends.push({ key: l.key, p })));
      ends.forEach(a => {
        if (!/^n/.test(a.key) || Math.abs(a.p[1] - 430) > 1) return;
        let best = null;
        ends.forEach(b => {
          if (!/^s/.test(b.key) || Math.abs(b.p[1] - 430) > 1) return;
          const gap = Math.abs(b.p[0] - a.p[0]);
          if (gap < 12 && (!best || gap < best.gap)) best = { gap, p: b.p };
        });
        if (best) a.p[0] = best.p[0];
      });

      drawn.forEach(l => {
        const d = smooth(l.pts);
        if (kind === 'track') {
          add(terrain, 'path', { class: 'trackEdge', d });
          add(terrain, 'path', { class: 'trackFill', d });
        } else {
          add(terrain, 'path', { class: kind, d });
        }
      });
    });
    for (const key in signs) {
      for (const name in signs[key]) {
        toPoints(signs[key][name], sheets[key]).forEach(([x, y]) => {
          add(terrain, 'use', { href: '#' + name, x, y });
        });
      }
    }

    // Planned courses (red) and the walked track (blue)
    const courses = document.getElementById('courses');
    const red = [
      ['ne', '320,-30 230,5 160,50 90,85 60,150 80,185 95,210 130,235 100,305 0,325 -60,320', ' wide'],
      ['ne', '520,-20 600,25 690,50 750,-20', ' wide'],
      ['ne', '615,30 620,70 670,115 730,165 735,220 720,270 690,360', ''],
      ['ne', '560,780 525,850 460,905 445,980 438,1060 410,1150 380,1225 270,1230 150,1290 0,1325 -80,1335 -125,1365 -145,1420', ''],
      ['nw', '930,790 960,820 1055,875 1105,920 1130,1010 1165,1090 1330,1310 1370,1355 1395,1420', ''],
      ['nw', '-20,622 50,630 80,612 140,624', ' wide']
    ].map(([key, text, size]) => ({ d: straight(toPoints(text, sheets[key])), size }));
    red.forEach(r => add(courses, 'path', { class: 'courseEdge' + r.size, d: r.d }));
    red.forEach(r => add(courses, 'path', { class: 'courseFill' + r.size, d: r.d }));
    const walked = straight(toPoints('1409,200 1390,350 1378,500 1365,530 1365,700 1370,730 1405,1100 1370,1260', sheets.sw));
    add(courses, 'path', { d: walked, fill: 'none', stroke: '#2b62a8', 'stroke-width': 18 });
    add(courses, 'path', { d: walked, fill: 'none', stroke: '#4a93e0', 'stroke-width': 14.5 });

    // Elevation profile
    const west = '375,775 388,765 396,752 410,690 420,668 430,660 442,685 452,650 468,590 480,565 495,553 515,548 538,545 550,580 562,610 575,628 588,622 598,585 608,530 620,512 632,518 648,553 662,545 680,515 688,505 698,475 710,495 722,445 735,415 750,418 778,440 800,500 818,552 830,510 843,545 855,512 867,548 880,542 890,520 905,490 916,448 930,470 940,490 952,495 963,515 970,545 975,570 990,568 1005,590 1025,650 1048,685 1062,745 1095,812 1110,832 1135,895 1170,958 1185,950 1195,960 1210,983 1225,985 1243,970 1258,972 1270,965 1282,980 1290,1015 1303,1068 1315,1073 1328,1063 1342,1080 1353,1055 1375,1060 1388,1080 1400,1060 1412,1035 1425,1030 1438,1045 1460,1090 1475,1072 1487,1080 1500,1045';
    const east = '24,997 45,1008 75,988 100,998 125,998 137,1005 150,980 175,980 190,945 212,915 225,928 240,932 250,943 262,935 280,895 298,858 312,880 325,878 338,955 350,950 365,960 380,950 400,885 415,855 428,795 438,783 452,797 465,738 478,755 492,800 515,865 530,878 550,878 577,915 590,860 605,850 620,810 630,768 640,752 652,722 665,715 678,680 688,667 703,715 715,670 728,690 740,635 752,600 766,587 780,615 792,665 802,695 815,702 828,715 842,700 853,680 868,705 892,712 910,785 930,870 942,888 955,882 965,855 980,795 1000,765 1015,750 1032,765 1045,715 1060,655 1082,605 1105,540 1118,455 1130,425 1145,405 1165,378 1182,368 1195,340 1205,328 1225,292 1243,268 1265,250 1285,230 1292,195 1332,175';
    const profile = toPoints(west, { x: 0, y: 1440, kx: 2.8, ky: 3 }).concat(toPoints(east, { x: 540, y: 1440, kx: 2.904, ky: 3 }));
    document.getElementById('heatLine').setAttribute('d', smooth(profile));
    const inside = [[136.500, profile[1][1]]].concat(profile.slice(1));
    document.getElementById('heatArea').setAttribute('d', smooth(inside) + 'V1832.5H136.5Z');

    const grid = document.getElementById('grid');
    [280, 240, 200, 160, 120, 80].forEach((m, i) => {
      const y = 1502 + i * 55.100;
      add(grid, 'path', { d: `M136 ${y}H999`, stroke: '#fff', 'stroke-opacity': .45, 'stroke-width': 1.6 });
      add(grid, 'text', { x: 122, y: y + 8, 'text-anchor': 'end' }, m + 'm');
    });
    ['0.0', '2.2', '4.4', '6.7', '8.9', '11.1', '13.4'].forEach((km, i) => {
      const x = 136.500 + i * 130;
      if (i) add(grid, 'path', { d: `M${x} 1467V1832`, stroke: '#fff', 'stroke-opacity': .15, 'stroke-width': 1.3 });
      add(grid, 'text', { x, y: 1866.500, 'text-anchor': 'middle' }, km + 'km');
    });
    add(grid, 'path', { d: 'M136.5 1467V1832.5H998.5V1467', fill: 'none', stroke: '#fff', 'stroke-opacity': .5, 'stroke-width': 1.4 });

    // Eight-toothed gear outline
    let gear = '';
    for (let a = 0; a < 360; a += 3) {
      const t = a * Math.PI / 180;
      const wave = Math.cos(8 * t);
      const r = 21 + 2.800 * Math.sign(wave) * Math.pow(Math.abs(wave), .8);
      gear += (a ? 'L' : 'M') + (r * Math.cos(t)).toFixed(2) + ' ' + (r * Math.sin(t)).toFixed(2);
    }
    document.getElementById('gear').setAttribute('d', gear + 'Z');
  </script>
</body>
</html>
